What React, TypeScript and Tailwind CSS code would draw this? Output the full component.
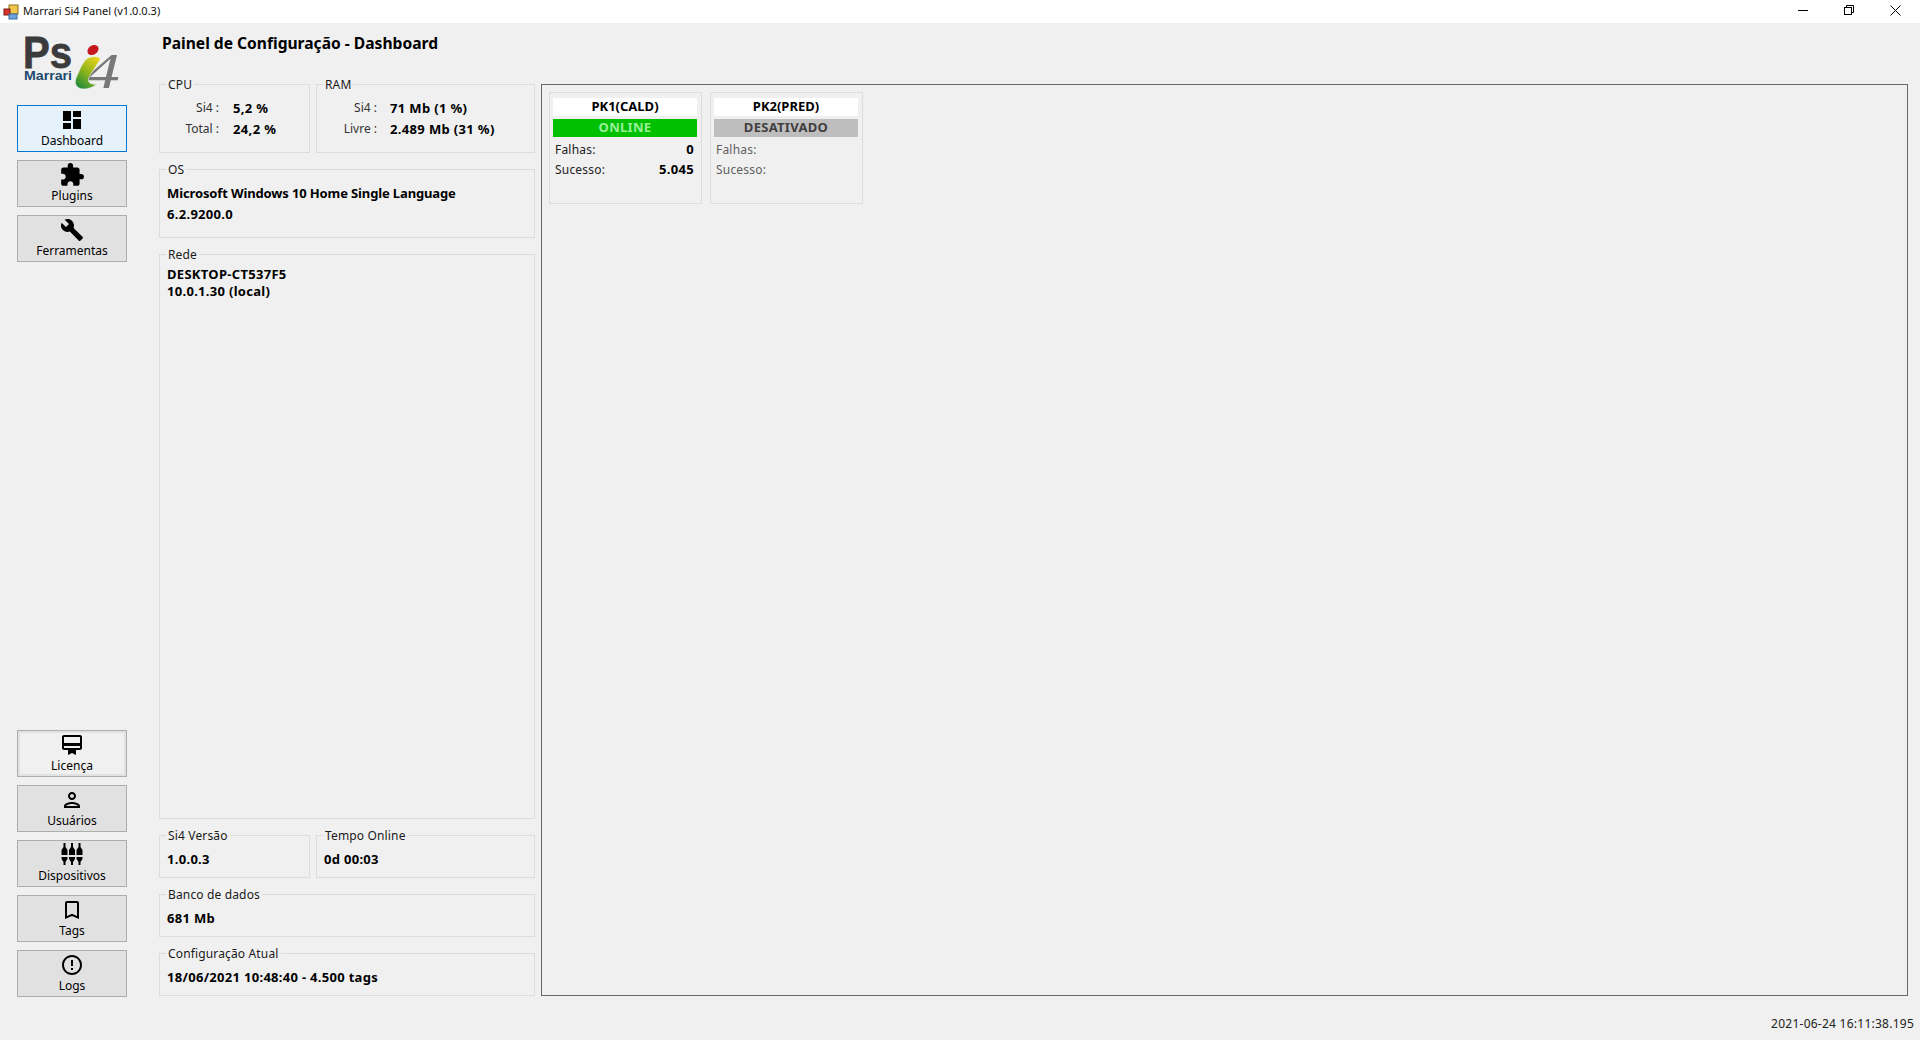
import type { ReactNode } from "react";
import {
  MdDashboard,
  MdExtension,
  MdBuild,
  MdOutlineCardMembership,
  MdOutlinePerson,
  MdOutlineBookmarkBorder,
  MdErrorOutline,
} from "react-icons/md";

function AppIcon() {
  return (
    <svg width="16" height="16" viewBox="0 0 16 16">
      <rect x="6" y="1" width="9" height="9" fill="#f2c84b" stroke="#8a6d1d" />
      <rect x="1" y="5" width="6" height="6" fill="#d8322a" stroke="#7a1c18" />
      <rect x="6" y="10" width="8" height="5" fill="#6da2dd" stroke="#3c6aa0" />
    </svg>
  );
}

function Logo() {
  return (
    <svg width="104" height="60" viewBox="-4 0 104 60" className="block">
      <defs>
        <linearGradient id="swash" x1="0.2" y1="1" x2="0.8" y2="0">
          <stop offset="0" stopColor="#1f8a3a" />
          <stop offset="0.5" stopColor="#8fb51c" />
          <stop offset="1" stopColor="#e8d21a" />
        </linearGradient>
      </defs>
      <text x="-2" y="33" fontFamily="Liberation Sans" fontWeight="700" fontSize="45" fill="#3b3b3d" stroke="#3b3b3d" strokeWidth="0.8" textLength="49" lengthAdjust="spacingAndGlyphs">
        Ps
      </text>
      <text x="-1" y="45" fontFamily="Liberation Sans" fontWeight="700" fontSize="12.5" fill="#1d4a6e" textLength="48" lengthAdjust="spacingAndGlyphs">
        Marrari
      </text>
      <text x="60" y="53" fontFamily="Liberation Serif" fontStyle="italic" fontSize="50" fill="#77787a" textLength="35" lengthAdjust="spacingAndGlyphs">
        4
      </text>
      <ellipse cx="68" cy="15" rx="6" ry="4.5" transform="rotate(-35 68 15)" fill="#c4161c" />
      <path d="M63 23 C69 21 76 21 75 25 L64 42 C62 47 65 50 72 49 C66 54 58 55 54 53 C49 50 50 45 52 41 C55 34 58 26 63 23 Z" fill="url(#swash)" stroke="#f0f0f0" strokeWidth="0.6" />
    </svg>
  );
}

function SlidersIcon() {
  return (
    <svg width="24" height="24" viewBox="0 0 24 24" fill="#000">
      {[1.5, 9, 16.5].map((x) => (
        <g key={x}>
          <rect x={x + 2} y="0" width="2" height="4" />
          <path d={`M${x} 7 L${x + 2} 4 H${x + 4} L${x + 6} 7 V12 H${x} Z`} />
          <path d={`M${x} 14 H${x + 6} V16 L${x + 4} 19 V22 H${x + 2} V19 L${x} 16 Z`} />
        </g>
      ))}
    </svg>
  );
}

function NavButton({ label, icon, state }: { label: string; icon: ReactNode; state?: "active" | "focus" }) {
  const look =
    state === "active"
      ? "bg-[#e5f1fb] border-[#0078d7]"
      : state === "focus"
        ? "bg-[#f0f0f0] border-[#adadad] shadow-[inset_0_0_0_2px_#e1e1e1]"
        : "bg-[#e1e1e1] border-[#adadad]";
  return (
    <div className={`h-[47px] w-[110px] border flex flex-col items-center pt-[2px] text-[12px] leading-[16px] text-black ${look}`}>
      <div className="h-[24px] flex items-center justify-center">{icon}</div>
      <span className="mt-[1px]">{label}</span>
    </div>
  );
}

function Group({ title, className, children }: { title: string; className?: string; children?: ReactNode }) {
  return (
    <div className={`relative border border-[#dcdcdc] ${className ?? ""}`}>
      <span className="absolute left-[6px] top-[-8px] bg-[#f0f0f0] px-[2px] text-[12px] leading-[16px] tracking-[0.15px] text-[#1a1a1a]">{title}</span>
      {children}
    </div>
  );
}

function StatRows({ rows, labelWidth }: { rows: [string, string][]; labelWidth: string }) {
  return (
    <div className="pt-[15px] flex flex-col gap-[5px]">
      {rows.map(([label, value]) => (
        <div key={label} className="flex h-[16px] leading-[16px] text-[12px]">
          <span className={`${labelWidth} text-right text-[#333]`}>{label}</span>
          <span className="ml-[13px] font-bold text-[13px] tracking-[0.35px] text-black">{value}</span>
        </div>
      ))}
    </div>
  );
}

function PkCard({ name, status, falhas, sucesso, online }: { name: string; status: string; falhas?: string; sucesso?: string; online: boolean }) {
  const labelColor = online ? "text-[#222]" : "text-[#5f5f5f]";
  return (
    <div className="w-[153px] h-[112px] border border-[#dcdcdc] pl-[3px] pr-[4px] pt-[5px]">
      <div className="h-[18px] bg-white text-center font-bold text-[13px] leading-[16px] text-black">{name}</div>
      <div className={`mt-[3px] h-[18px] text-center font-bold text-[13px] tracking-[0.3px] leading-[17px] ${online ? "bg-[#00c000] text-[#9af09a]" : "bg-[#bebebe] text-[#404040]"}`}>
        {status}
      </div>
      <div className="mt-[5px] flex flex-col gap-[4px] px-[2px] text-[12px] leading-[16px] tracking-[0.2px]">
        <div className="flex justify-between">
          <span className={labelColor}>Falhas:</span>
          <span className="font-bold text-[13px] leading-[14px] text-black pr-[1px]">{falhas}</span>
        </div>
        <div className="flex justify-between">
          <span className={labelColor}>Sucesso:</span>
          <span className="font-bold text-[13px] leading-[14px] text-black pr-[1px] tracking-[0.3px]">{sucesso}</span>
        </div>
      </div>
    </div>
  );
}

const boldBase = "font-bold text-[13px] leading-[16px] text-black";
const boldLine = `${boldBase} tracking-[0.3px]`;

export default function App() {
  return (
    <div className="w-[1920px] h-[1040px] flex flex-col bg-[#f0f0f0] overflow-hidden font-['Noto_Sans',sans-serif]">
      <header className="h-[23px] bg-white flex items-center shrink-0">
        <div className="ml-[3px] flex items-center gap-[4px]">
          <AppIcon />
          <span className="text-[11px] text-[#111]">Marrari Si4 Panel (v1.0.0.3)</span>
        </div>
        <div className="ml-auto mr-[2px] flex items-center h-full">
          <button className="w-[46px] h-full pb-[3px] flex items-center justify-center">
            <svg width="10" height="10" viewBox="0 0 10 10"><path d="M0 5.5H10" stroke="#000" /></svg>
          </button>
          <button className="w-[46px] h-full pb-[3px] flex items-center justify-center">
            <svg width="10" height="10" viewBox="0 0 10 10" fill="none" stroke="#000"><rect x="0.5" y="2.5" width="7" height="7" /><path d="M2.5 2.5V0.5H9.5V7.5H7.5" /></svg>
          </button>
          <button className="w-[46px] h-full pb-[3px] flex items-center justify-center">
            <svg width="11" height="11" viewBox="0 0 11 11" stroke="#000"><path d="M0.5 0.5L10.5 10.5M10.5 0.5L0.5 10.5" /></svg>
          </button>
        </div>
      </header>

      <div className="flex-1 flex min-h-0">
        <aside className="ml-[17px] w-[110px] shrink-0 flex flex-col">
          <div className="h-[82px] pl-[4px] pt-[12px]">
            <Logo />
          </div>
          <div className="flex flex-col gap-[8px]">
            <NavButton label="Dashboard" state="active" icon={<MdDashboard size={24} color="#000" />} />
            <NavButton label="Plugins" icon={<MdExtension size={26} color="#000" />} />
            <NavButton label="Ferramentas" icon={<MdBuild size={24} color="#000" />} />
          </div>
          <div className="mt-[468px] flex flex-col gap-[8px]">
            <NavButton label="Licença" state="focus" icon={<MdOutlineCardMembership size={24} color="#000" />} />
            <NavButton label="Usuários" icon={<MdOutlinePerson size={24} color="#000" />} />
            <NavButton label="Dispositivos" icon={<SlidersIcon />} />
            <NavButton label="Tags" icon={<MdOutlineBookmarkBorder size={24} color="#000" />} />
            <NavButton label="Logs" icon={<MdErrorOutline size={24} color="#000" />} />
          </div>
        </aside>

        <div className="flex-1 min-w-0 flex flex-col">
          <h1 className="h-[61px] shrink-0 ml-[35px] pt-[10px] text-[15.6px] leading-[20px] font-bold text-black">
            Painel de Configuração - Dashboard
          </h1>
          <div className="flex">
            <div className="ml-[32px] w-[376px] h-[912px] flex flex-col gap-[16px] shrink-0">
              <div className="flex gap-[6px]">
                <Group title="CPU" className="w-[151px] h-[69px]">
                  <StatRows labelWidth="w-[59px] mr-[1px]" rows={[["Si4 :", "5,2 %"], ["Total :", "24,2 %"]]} />
                </Group>
                <Group title="RAM" className="flex-1 h-[69px]">
                  <StatRows labelWidth="w-[60px]" rows={[["Si4 :", "71 Mb (1 %)"], ["Livre :", "2.489 Mb (31 %)"]]} />
                </Group>
              </div>
              <Group title="OS" className="h-[69px] pl-[7px] pt-[15px]">
                <div className="flex flex-col gap-[5px]">
                  <div className={`${boldBase} tracking-[-0.13px]`}>Microsoft Windows 10 Home Single Language</div>
                  <div className={boldLine}>6.2.9200.0</div>
                </div>
              </Group>
              <Group title="Rede" className="flex-1 pl-[7px] pt-[11px]">
                <div className={boldLine}>DESKTOP-CT537F5</div>
                <div className={`${boldLine} mt-[1px]`}>10.0.1.30 (local)</div>
              </Group>
              <div className="flex gap-[6px]">
                <Group title="Si4 Versão" className="w-[151px] h-[43px] pl-[7px] pt-[15px]">
                  <div className={boldLine}>1.0.0.3</div>
                </Group>
                <Group title="Tempo Online" className="flex-1 h-[43px] pl-[7px] pt-[15px]">
                  <div className={boldLine}>0d 00:03</div>
                </Group>
              </div>
              <Group title="Banco de dados" className="h-[43px] pl-[7px] pt-[15px]">
                <div className={boldLine}>681 Mb</div>
              </Group>
              <Group title="Configuração Atual" className="h-[43px] pl-[7px] pt-[15px]">
                <div className={boldLine}>18/06/2021 10:48:40 - 4.500 tags</div>
              </Group>
            </div>
            <main className="ml-[6px] mr-[12px] flex-1 h-[912px] border border-[#696969] pl-[7px] pt-[7px] flex items-start gap-[8px]">
              <PkCard name="PK1(CALD)" status="ONLINE" falhas="0" sucesso="5.045" online />
              <PkCard name="PK2(PRED)" status="DESATIVADO" online={false} />
            </main>
          </div>
          <footer className="mt-[20px] pr-[6px] text-right text-[12px] leading-[16px] tracking-[0.25px] text-[#222]">2021-06-24 16:11:38.195</footer>
        </div>
      </div>
    </div>
  );
}
